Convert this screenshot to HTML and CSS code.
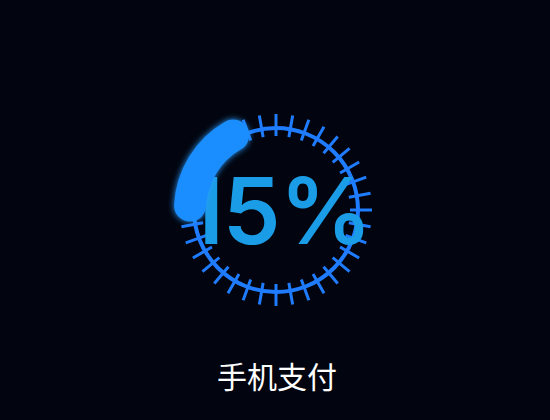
FILE: index.html
```html
<!DOCTYPE html>
<html>
<head>
<meta charset="utf-8">
<link rel="stylesheet" href="styles.css">
</head>
<body>
<main class="screen">
  <div class="gauge">
    <svg class="ring" width="220" height="220" viewBox="0 0 220 220">
      <circle cx="110" cy="110" r="82" fill="none" stroke="#1f7cff" stroke-width="4"/>
      <g stroke="#1f7cff" stroke-width="3">
        <line x1="110" y1="14" x2="110" y2="36" transform="rotate(0 110 110)"/>
        <line x1="110" y1="14" x2="110" y2="36" transform="rotate(10 110 110)"/>
        <line x1="110" y1="14" x2="110" y2="36" transform="rotate(20 110 110)"/>
        <line x1="110" y1="14" x2="110" y2="36" transform="rotate(30 110 110)"/>
        <line x1="110" y1="14" x2="110" y2="36" transform="rotate(40 110 110)"/>
        <line x1="110" y1="14" x2="110" y2="36" transform="rotate(50 110 110)"/>
        <line x1="110" y1="14" x2="110" y2="36" transform="rotate(60 110 110)"/>
        <line x1="110" y1="14" x2="110" y2="36" transform="rotate(70 110 110)"/>
        <line x1="110" y1="14" x2="110" y2="36" transform="rotate(80 110 110)"/>
        <line x1="110" y1="14" x2="110" y2="36" transform="rotate(90 110 110)"/>
        <line x1="110" y1="14" x2="110" y2="36" transform="rotate(100 110 110)"/>
        <line x1="110" y1="14" x2="110" y2="36" transform="rotate(110 110 110)"/>
        <line x1="110" y1="14" x2="110" y2="36" transform="rotate(120 110 110)"/>
        <line x1="110" y1="14" x2="110" y2="36" transform="rotate(130 110 110)"/>
        <line x1="110" y1="14" x2="110" y2="36" transform="rotate(140 110 110)"/>
        <line x1="110" y1="14" x2="110" y2="36" transform="rotate(150 110 110)"/>
        <line x1="110" y1="14" x2="110" y2="36" transform="rotate(160 110 110)"/>
        <line x1="110" y1="14" x2="110" y2="36" transform="rotate(170 110 110)"/>
        <line x1="110" y1="14" x2="110" y2="36" transform="rotate(180 110 110)"/>
        <line x1="110" y1="14" x2="110" y2="36" transform="rotate(190 110 110)"/>
        <line x1="110" y1="14" x2="110" y2="36" transform="rotate(200 110 110)"/>
        <line x1="110" y1="14" x2="110" y2="36" transform="rotate(210 110 110)"/>
        <line x1="110" y1="14" x2="110" y2="36" transform="rotate(220 110 110)"/>
        <line x1="110" y1="14" x2="110" y2="36" transform="rotate(230 110 110)"/>
        <line x1="110" y1="14" x2="110" y2="36" transform="rotate(240 110 110)"/>
        <line x1="110" y1="14" x2="110" y2="36" transform="rotate(250 110 110)"/>
        <line x1="110" y1="14" x2="110" y2="36" transform="rotate(260 110 110)"/>
        <line x1="110" y1="14" x2="110" y2="36" transform="rotate(270 110 110)"/>
        <line x1="110" y1="14" x2="110" y2="36" transform="rotate(280 110 110)"/>
        <line x1="110" y1="14" x2="110" y2="36" transform="rotate(290 110 110)"/>
        <line x1="110" y1="14" x2="110" y2="36" transform="rotate(300 110 110)"/>
        <line x1="110" y1="14" x2="110" y2="36" transform="rotate(310 110 110)"/>
        <line x1="110" y1="14" x2="110" y2="36" transform="rotate(320 110 110)"/>
        <line x1="110" y1="14" x2="110" y2="36" transform="rotate(330 110 110)"/>
        <line x1="110" y1="14" x2="110" y2="36" transform="rotate(340 110 110)"/>
        <line x1="110" y1="14" x2="110" y2="36" transform="rotate(350 110 110)"/>
      </g>
    </svg>
    <div class="value">15%</div>
    <svg class="blob" width="220" height="220" viewBox="0 0 220 220">
      <path d="M 24.1 105.5 A 86 86 0 0 1 67 35.5" fill="none" stroke="#1b8eff" stroke-width="32" stroke-linecap="round"/>
    </svg>
  </div>
  <div class="label">手机支付</div>
</main>
</body>
</html>
```

FILE: styles.css
```css
html, body {
  margin: 0;
  padding: 0;
  background: #02050f;
}
.screen {
  width: 550px;
  height: 420px;
  display: flex;
  flex-direction: column;
  align-items: center;
  padding-top: 100px;
  padding-left: 2px;
  box-sizing: border-box;
}
.gauge {
  display: grid;
  width: 220px;
  height: 220px;
}
.gauge > * {
  grid-area: 1 / 1;
}
.ring, .blob {
  display: block;
}
.blob {
  filter: drop-shadow(0 0 3px #2a9bff);
}
.value {
  display: flex;
  align-items: center;
  justify-content: center;
  font-family: Inter, "Liberation Sans", sans-serif;
  font-weight: 600;
  font-size: 92px;
  letter-spacing: -1px;
  color: #1a9de6;
  line-height: 1;
  padding-top: 2px;
  padding-left: 4px;
}
.label {
  margin-top: 40px;
  font-family: "Noto Sans CJK SC", "Liberation Sans", sans-serif;
  font-size: 30px;
  line-height: 30px;
  color: #ffffff;
  margin-left: 2px;
}
```
